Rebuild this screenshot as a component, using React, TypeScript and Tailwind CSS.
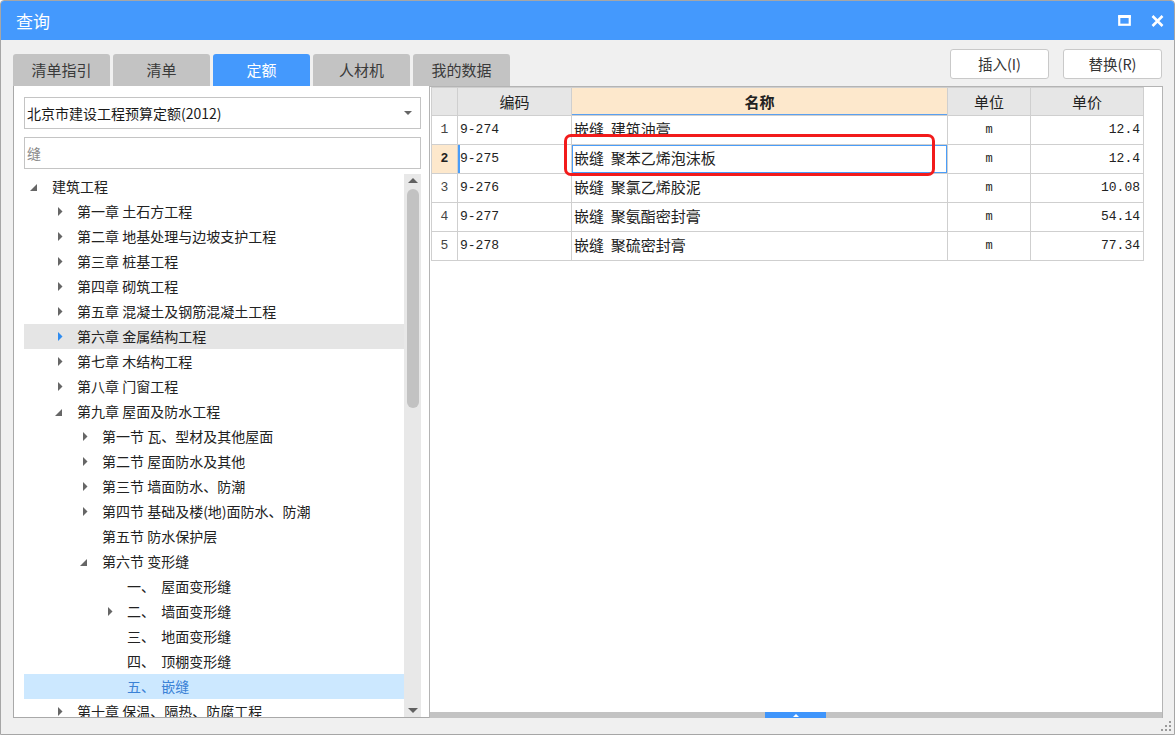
import React from "react";

type Node = { l: number; t: string; s?: "open" | "closed"; hover?: boolean; sel?: boolean };

const tree: Node[] = [
  { l: 0, t: "建筑工程", s: "open" },
  { l: 1, t: "第一章 土石方工程", s: "closed" },
  { l: 1, t: "第二章 地基处理与边坡支护工程", s: "closed" },
  { l: 1, t: "第三章 桩基工程", s: "closed" },
  { l: 1, t: "第四章 砌筑工程", s: "closed" },
  { l: 1, t: "第五章 混凝土及钢筋混凝土工程", s: "closed" },
  { l: 1, t: "第六章 金属结构工程", s: "closed", hover: true },
  { l: 1, t: "第七章 木结构工程", s: "closed" },
  { l: 1, t: "第八章 门窗工程", s: "closed" },
  { l: 1, t: "第九章 屋面及防水工程", s: "open" },
  { l: 2, t: "第一节 瓦、型材及其他屋面", s: "closed" },
  { l: 2, t: "第二节 屋面防水及其他", s: "closed" },
  { l: 2, t: "第三节 墙面防水、防潮", s: "closed" },
  { l: 2, t: "第四节 基础及楼(地)面防水、防潮", s: "closed" },
  { l: 2, t: "第五节 防水保护层" },
  { l: 2, t: "第六节 变形缝", s: "open" },
  { l: 3, t: "一、  屋面变形缝" },
  { l: 3, t: "二、  墙面变形缝", s: "closed" },
  { l: 3, t: "三、  地面变形缝" },
  { l: 3, t: "四、  顶棚变形缝" },
  { l: 3, t: "五、  嵌缝", sel: true },
  { l: 1, t: "第十章 保温、隔热、防腐工程", s: "closed" },
];

const rows = [
  { n: "1", code: "9-274", name: "嵌缝  建筑油膏", unit: "m", price: "12.4" },
  { n: "2", code: "9-275", name: "嵌缝  聚苯乙烯泡沫板", unit: "m", price: "12.4" },
  { n: "3", code: "9-276", name: "嵌缝  聚氯乙烯胶泥", unit: "m", price: "10.08" },
  { n: "4", code: "9-277", name: "嵌缝  聚氨酯密封膏", unit: "m", price: "54.14" },
  { n: "5", code: "9-278", name: "嵌缝  聚硫密封膏", unit: "m", price: "77.34" },
];

const tabs = ["清单指引", "清单", "定额", "人材机", "我的数据"];

function Arrow({ s, blue }: { s?: "open" | "closed"; blue?: boolean }) {
  if (s === "closed")
    return (
      <svg width="5" height="9" viewBox="0 0 5 9">
        <polygon points="0,0 4.5,4.5 0,9" fill={blue ? "#2f8cf0" : "#666666"} />
      </svg>
    );
  if (s === "open")
    return (
      <svg width="7" height="7" viewBox="0 0 7 7" className="ml-[-4px] mt-[2px]">
        <polygon points="7,0 7,7 0,7" fill="#666666" />
      </svg>
    );
  return null;
}

export default function App() {
  return (
    <div className="w-[1175px] h-[735px] bg-[#f0f0f0] border border-[#a6a6a6] rounded-t-[4px] overflow-hidden flex flex-col font-['Noto_Sans_CJK_SC',sans-serif] text-[#222]">
      {/* Title bar */}
      <div className="h-[39px] shrink-0 bg-[#4499fd] flex items-center justify-between pl-[15px] pr-[10px]">
        <span className="text-white text-[17px] leading-none">查询</span>
        <div className="flex items-center gap-[20px]">
          <svg width="13" height="11" viewBox="0 0 13 11">
            <rect x="1.25" y="1.5" width="10.5" height="8.25" fill="none" stroke="white" strokeWidth="2.2" />
            <rect x="0.2" y="0" width="12.6" height="3" fill="white" />
          </svg>
          <svg width="13" height="12" viewBox="0 0 13 12">
            <path d="M1.5 1 L11.5 11 M11.5 1 L1.5 11" stroke="white" strokeWidth="2.6" />
          </svg>
        </div>
      </div>

      {/* Body */}
      <div className="flex flex-col pl-[12px] pr-[11px] flex-1">
        <div className="h-[46px] flex justify-between">
          <div className="flex gap-[3px] self-end">
            {tabs.map((t) => (
              <div
                key={t}
                className={
                  "w-[97px] h-[32px] rounded-t-[3px] flex items-center justify-center pb-[1px] text-[15px] leading-none " +
                  (t === "定额" ? "bg-[#4499fd] text-white" : "bg-[#c3c3c3] text-[#3a3a3a]")
                }
              >
                {t}
              </div>
            ))}
          </div>
          <div className="flex gap-[14px] mt-[9px] mr-[1px] self-start">
            {["插入(I)", "替换(R)"].map((b) => (
              <div
                key={b}
                className="w-[99px] h-[30px] bg-white border border-[#c9c9c9] rounded-[3px] flex items-center justify-center text-[14.5px] leading-none text-[#333]"
              >
                {b}
              </div>
            ))}
          </div>
        </div>

        <div className="h-[632px] flex">
          {/* Left panel */}
          <div className="w-[416px] bg-white border-l border-b border-[#a9a9a9] pl-[10px] pr-[8px] pt-[11px] flex flex-col">
            <div className="h-[32px] border border-[#c4c4c4] flex items-center justify-between pl-[2px] pr-[8px]">
              <span className="text-[14px] leading-none text-[#1a1a1a]">北京市建设工程预算定额(2012)</span>
              <svg width="8" height="4" viewBox="0 0 8 4">
                <polygon points="0,0 8,0 4,4" fill="#666" />
              </svg>
            </div>
            <div className="h-[32px] mt-[8px] border border-[#c4c4c4] flex items-center pl-[2px]">
              <span className="text-[14px] leading-none text-[#8a8a8a]">缝</span>
            </div>
            <div className="mt-[5px] flex flex-1 min-h-0">
              <div className="w-[380px] overflow-hidden">
                {tree.map((n, i) => (
                  <div
                    key={i}
                    className={
                      "h-[25px] flex items-center " +
                      (n.sel ? "bg-[#cce8ff] text-[#3b82d6]" : n.hover ? "bg-[#e5e5e5]" : "")
                    }
                    style={{ paddingLeft: n.l * 25 + 4 }}
                  >
                    <div className="w-[14px] flex justify-center items-center">
                      <Arrow s={n.s} blue={n.hover} />
                    </div>
                    <span className="ml-[10px] mt-[-2px] text-[14px] leading-none whitespace-pre">{n.t}</span>
                  </div>
                ))}
              </div>
              <div className="w-[17px] bg-[#e8e8e8] flex flex-col items-center">
                <svg width="10" height="5" viewBox="0 0 10 5" className="mt-[4px]">
                  <polygon points="0,5 10,5 5,0" fill="#606060" />
                </svg>
                <div className="w-[12px] h-[219px] mt-[6px] rounded-full bg-[#c2c2c2]" />
                <div className="flex-1" />
                <svg width="10" height="5" viewBox="0 0 10 5" className="mb-[4px]">
                  <polygon points="0,0 10,0 5,5" fill="#606060" />
                </svg>
              </div>
            </div>
          </div>

          {/* Right panel */}
          <div className="relative w-[734px] bg-white border-l border-t border-r border-[#b4b4b4] flex flex-col">
            <table className="ml-[1px] w-[712px] border-collapse table-fixed text-[#222]">
              <colgroup>
                <col className="w-[26px]" />
                <col className="w-[114px]" />
                <col className="w-[376px]" />
                <col className="w-[83px]" />
                <col className="w-[113px]" />
              </colgroup>
              <thead>
                <tr className="h-[28px]">
                  <th className="border border-[#cfcfcf] bg-[#e6e6e6]" />
                  <th className="border border-[#cfcfcf] bg-[#e6e6e6] text-[15px] font-normal leading-none">编码</th>
                  <th className="border border-[#cfcfcf] bg-[#fde8cc] text-[15px] font-bold leading-none shadow-[inset_0_-1px_0_#5aa0f0]">名称</th>
                  <th className="border border-[#cfcfcf] bg-[#e6e6e6] text-[15px] font-normal leading-none">单位</th>
                  <th className="border border-[#cfcfcf] bg-[#e6e6e6] text-[15px] font-normal leading-none">单价</th>
                </tr>
              </thead>
              <tbody>
                {rows.map((r, i) => {
                  const cur = i === 1;
                  return (
                    <tr key={r.n} className="h-[29px]">
                      <td
                        className={
                          "border border-[#cfcfcf] text-center text-[13px] font-['Liberation_Mono',monospace] " +
                          (cur ? "bg-[#fde8cc] font-bold" : "text-[#444]")
                        }
                      >
                        {r.n}
                      </td>
                      <td
                        className={
                          "border border-[#cfcfcf] pl-[2px] text-[13px] font-['Liberation_Mono',monospace] " +
                          (cur ? "shadow-[inset_2px_0_0_#4a9df8]" : "")
                        }
                      >
                        {r.code}
                      </td>
                      <td
                        className={
                          "border border-[#cfcfcf] pl-[2px] pb-[3px] text-[15px] leading-none whitespace-pre " +
                          (cur ? "shadow-[inset_0_0_0_1px_#4a9df8]" : "")
                        }
                      >
                        {r.name}
                      </td>
                      <td className="border border-[#cfcfcf] text-center text-[12px] font-['Liberation_Mono',monospace]">
                        {r.unit}
                      </td>
                      <td className="border border-[#cfcfcf] text-right pr-[3px] text-[13px] font-['Liberation_Mono',monospace]">
                        {r.price}
                      </td>
                    </tr>
                  );
                })}
              </tbody>
            </table>

            {/* red annotation */}
            <div className="absolute left-[134px] top-[47px] w-[371px] h-[42px] border-[3px] border-[#f21b1b] rounded-[7px]" />

            <div className="mt-auto h-[6px] bg-[#c3c3c3] relative">
              <div className="absolute left-[335px] top-0 w-[61px] h-[6px] bg-[#3f95fb] flex justify-center items-center">
                <svg width="6" height="3" viewBox="0 0 6 3">
                  <polygon points="0,3 6,3 3,0" fill="white" />
                </svg>
              </div>
            </div>
          </div>
        </div>

        <div className="flex-1 flex justify-end items-end pb-[2px] mr-[-9px]">
          <svg width="11" height="11" viewBox="0 0 11 11">
            {[
              [8, 0],
              [8, 4],
              [4, 4],
              [8, 8],
              [4, 8],
              [0, 8],
            ].map(([x, y], i) => (
              <rect key={i} x={x} y={y} width="2" height="2" fill="#9a9a9a" />
            ))}
          </svg>
        </div>
      </div>
    </div>
  );
}
